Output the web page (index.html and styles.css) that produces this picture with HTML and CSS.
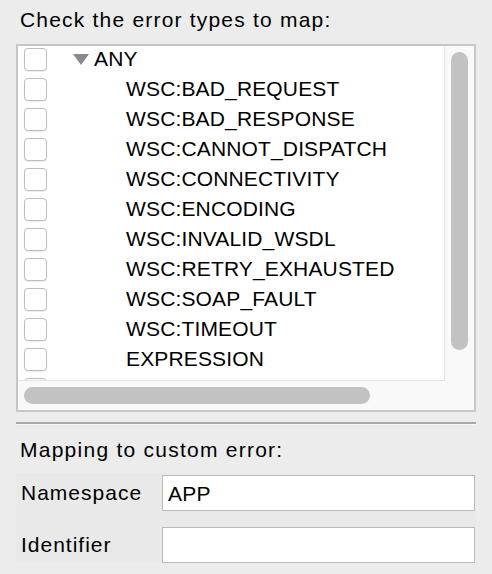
FILE: index.html
```html
<!DOCTYPE html>
<html>
<head>
    <title>Error Mapping</title>
    <link rel="stylesheet" href="styles.css">
</head>
<body>
    <div class="caption">Check the error types to map:</div>
    <div class="tree">
        <div class="list">
            <div class="rows">
                <div class="row"><span class="check"></span><span class="arrow"></span><span class="root">ANY</span></div>
                <div class="row"><span class="check"></span><span class="item">WSC:BAD_REQUEST</span></div>
                <div class="row"><span class="check"></span><span class="item">WSC:BAD_RESPONSE</span></div>
                <div class="row"><span class="check"></span><span class="item">WSC:CANNOT_DISPATCH</span></div>
                <div class="row"><span class="check"></span><span class="item">WSC:CONNECTIVITY</span></div>
                <div class="row"><span class="check"></span><span class="item">WSC:ENCODING</span></div>
                <div class="row"><span class="check"></span><span class="item">WSC:INVALID_WSDL</span></div>
                <div class="row"><span class="check"></span><span class="item">WSC:RETRY_EXHAUSTED</span></div>
                <div class="row"><span class="check"></span><span class="item">WSC:SOAP_FAULT</span></div>
                <div class="row"><span class="check"></span><span class="item">WSC:TIMEOUT</span></div>
                <div class="row"><span class="check"></span><span class="item">EXPRESSION</span></div>
                <div class="row"><span class="check"></span></div>
            </div>
        </div>
        <div class="vscroll"><div class="vthumb"></div></div>
        <div class="hscroll"><div class="hthumb"></div></div>
        <div class="corner"></div>
    </div>
    <div class="separator"></div>
    <div class="caption mapping">Mapping to custom error:</div>
    <div class="fields">
        <label class="field-label" for="namespace">Namespace</label>
        <input class="field-input" id="namespace" type="text" value="APP">
        <label class="field-label" for="identifier">Identifier</label>
        <input class="field-input" id="identifier" type="text" value="">
    </div>
</body>
</html>
```
FILE: styles.css
```css
body {
    margin: 0;
    background-color: #ececec;
    font-family: "Liberation Sans", Arial, sans-serif;
    font-size: 21px;
    color: #000;
}

.caption {
    padding: 8px 20px 0;
    line-height: 24px;
    height: 24px;
    margin-bottom: 12px;
    letter-spacing: 1.2px;
}

.tree {
    margin: 0 16px;
    border: 2px solid #c6c6c6;
    display: grid;
    grid-template-columns: 1fr 29px;
    grid-template-rows: 335px 29px;
}

.list {
    background-color: #fff;
    border-right: 1px solid #e4e4e4;
    border-bottom: 1px solid #e4e4e4;
    overflow: hidden;
}

.rows {
    margin-top: -2px;
}

.row {
    display: flex;
    align-items: center;
    height: 30px;
    white-space: nowrap;
    letter-spacing: 0.15px;
}

.check {
    flex: none;
    width: 21px;
    height: 21px;
    margin-left: 6px;
    border: 1px solid #bdbdbd;
    border-radius: 4px;
    background-color: #fff;
    box-shadow: 0 1px 1px rgba(0, 0, 0, 0.08);
}

.arrow {
    width: 0;
    height: 0;
    margin-left: 26px;
    border-left: 8px solid transparent;
    border-right: 8px solid transparent;
    border-top: 11px solid #8a8a8a;
}

.root {
    margin-left: 5px;
}

.item {
    margin-left: 79px;
}

.vscroll {
    background-color: #f9f9f9;
    padding: 6px 0 0 6px;
}

.vthumb {
    width: 17px;
    height: 298px;
    border-radius: 9px;
    background-color: #c2c2c2;
}

.hscroll {
    background-color: #f9f9f9;
    padding: 6px 0 0 6px;
}

.hthumb {
    width: 346px;
    height: 17px;
    border-radius: 9px;
    background-color: #c2c2c2;
}

.corner {
    background-color: #f9f9f9;
}

.separator {
    margin: 10px 16px 0;
    height: 2px;
    background-color: #a8a8a8;
    border-bottom: 1px solid #f6f6f6;
}

.mapping {
    padding-top: 13px;
    margin-bottom: 11px;
    letter-spacing: 1.25px;
}

.fields {
    margin: 0 16px;
    padding: 2px 1px 0 5px;
    background-color: #e9e9e9;
    display: grid;
    grid-template-columns: 141px 1fr;
    row-gap: 16px;
    align-items: center;
}

.field-label {
    line-height: 24px;
    letter-spacing: 1px;
}

.field-input {
    box-sizing: border-box;
    height: 36px;
    margin: 0;
    padding: 2px 5px 0;
    border: 1px solid #bababa;
    background-color: #fff;
    font-family: "Liberation Sans", Arial, sans-serif;
    font-size: 21px;
    letter-spacing: 0.3px;
    color: #000;
    outline: none;
}
```
